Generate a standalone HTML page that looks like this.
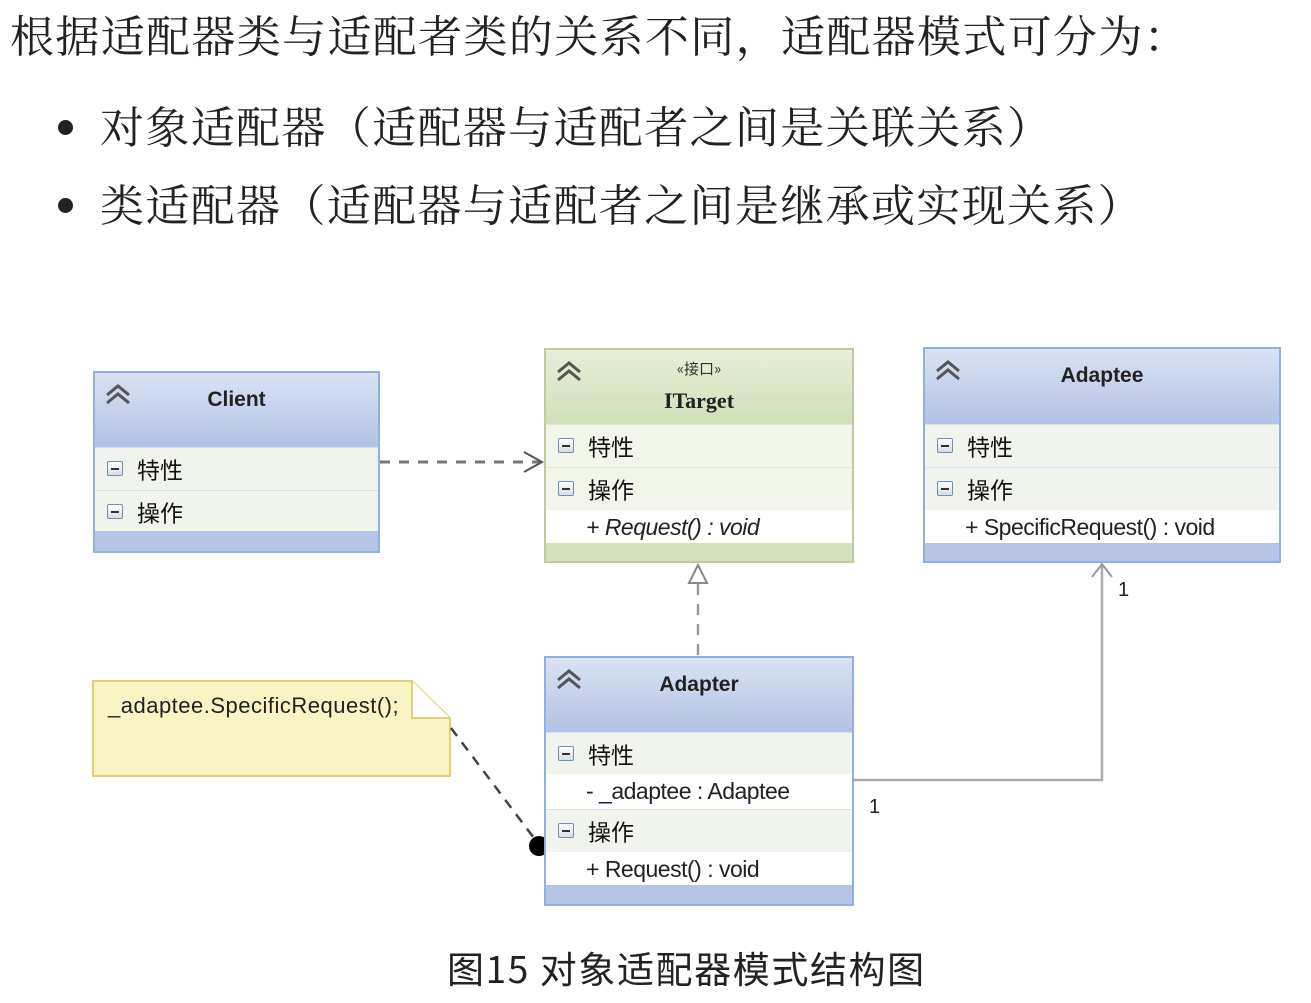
<!DOCTYPE html>
<html><head><meta charset="utf-8"><style>
*{margin:0;padding:0;box-sizing:border-box}
body{width:1311px;height:1003px;background:#fff;position:relative;overflow:hidden;font-family:"Liberation Sans","Noto Sans CJK SC",sans-serif;color:#222}
.t{position:absolute;white-space:nowrap;font-family:"Noto Serif CJK SC",serif;font-size:44px;color:#222;line-height:1;letter-spacing:1.35px}
.dot{position:absolute;width:15px;height:15px;border-radius:50%;background:#222}
.box{position:absolute;border:2px solid #8fb0e0;background:#fff}
.box.g{border-color:#c2c99f}
.hd{position:absolute;left:0;right:0;top:0;background:linear-gradient(#dae2f3,#b3c2e4)}
.g .hd{background:linear-gradient(#e8efd9,#cfdfb7)}
.row{position:absolute;left:0;right:0;background:#f1f4ec;border-top:1px solid #d5def0}
.g .row{background:#f1f5ea;border-top-color:#dfe8cf}
.row .lbl{position:absolute;left:42px;top:50%;transform:translateY(-52%);font-size:23px;font-family:"Noto Sans CJK SC",sans-serif;color:#111}
.mi{position:absolute;left:12px;top:50%;margin-top:-8px;width:16px;height:15px;border:1px solid #6d8fb8;border-radius:2px;background:linear-gradient(#fff,#d8dde5)}
.mi:after{content:"";position:absolute;left:3px;right:3px;top:6px;height:2px;background:#333}
.m{position:absolute;left:0;right:0;background:#fff}
.m span{position:absolute;left:40px;top:50%;transform:translateY(-52%);font-size:23px;color:#222;letter-spacing:-0.5px}
.ft{position:absolute;left:0;right:0;bottom:0;background:#b6c4e6}
.g .ft{background:#d2e0bb}
.nm{position:absolute;left:0;right:0;text-align:center;font-weight:bold;font-size:21px;color:#222}
.chev{position:absolute;left:8px;top:8px}
</style></head><body>
<div class="t" style="left:10px;top:11px">根据适配器类与适配者类的关系不同，适配器模式可分为：</div>
<div class="dot" style="left:58px;top:120px"></div>
<div class="t" style="left:100px;top:102px">对象适配器（适配器与适配者之间是关联关系）</div>
<div class="dot" style="left:58px;top:198px"></div>
<div class="t" style="left:100px;top:180px">类适配器（适配器与适配者之间是继承或实现关系）</div>

<svg width="1311" height="1003" style="position:absolute;left:0;top:0">
<line x1="380" y1="462" x2="541" y2="462" stroke="#777" stroke-width="3" stroke-dasharray="10,9"/>
<polyline points="524,452 542,462 524,472" fill="none" stroke="#555" stroke-width="2"/>
<line x1="698" y1="584" x2="698" y2="656" stroke="#999" stroke-width="2.5" stroke-dasharray="11,9"/>
<polygon points="698,565 689,583 707,583" fill="#fff" stroke="#888" stroke-width="2"/>
<polyline points="853,780 1102,780 1102,564" fill="none" stroke="#aaa" stroke-width="2.5"/>
<polyline points="1092,577 1102,564 1112,577" fill="none" stroke="#999" stroke-width="2"/>
<text x="1118" y="596" font-size="20" font-family="Liberation Sans" fill="#222">1</text>
<text x="869" y="813" font-size="20" font-family="Liberation Sans" fill="#222">1</text>
<polygon points="93,681 412,681 450,718 450,776 93,776" fill="#f9f4c4" stroke="#e2cf6f" stroke-width="2"/>
<polyline points="412,681 412,718 450,718" fill="#fff" stroke="#e2cf6f" stroke-width="2"/>
<text x="108" y="713" font-size="22" font-family="Liberation Sans" fill="#222" letter-spacing="-0.6" textLength="290">_adaptee.SpecificRequest();</text>
<line x1="451" y1="728" x2="534" y2="838" stroke="#444" stroke-width="2.5" stroke-dasharray="10,8"/>
<circle cx="539" cy="846" r="10" fill="#000"/>
</svg>

<!-- Client -->
<div class="box" style="left:93px;top:371px;width:287px;height:182px">
 <div class="hd" style="height:74px"></div>
 <svg class="chev" width="30" height="26"><path d="M4 14 L15 5 L26 14 M4 22 L15 13 L26 22" fill="none" stroke="#555" stroke-width="3"/></svg>
 <div class="nm" style="top:15px">Client</div>
 <div class="row" style="top:74px;height:43px"><div class="mi"></div><div class="lbl">特性</div></div>
 <div class="row" style="top:117px;height:43px"><div class="mi"></div><div class="lbl">操作</div></div>
 <div class="ft" style="height:20px"></div>
</div>

<!-- ITarget -->
<div class="box g" style="left:544px;top:348px;width:310px;height:215px">
 <div class="hd" style="height:74px"></div>
 <svg class="chev" width="30" height="26"><path d="M4 14 L15 5 L26 14 M4 22 L15 13 L26 22" fill="none" stroke="#555" stroke-width="3"/></svg>
 <div style="position:absolute;left:0;right:0;top:8px;text-align:center;font-size:15px;font-family:'Noto Sans CJK SC',sans-serif;color:#333">«接口»</div>
 <div class="nm" style="top:38px;font-family:'Liberation Serif',serif;font-size:22px">ITarget</div>
 <div class="row" style="top:74px;height:43px"><div class="mi"></div><div class="lbl">特性</div></div>
 <div class="row" style="top:117px;height:43px"><div class="mi"></div><div class="lbl">操作</div></div>
 <div class="m" style="top:160px;height:35px"><span style="font-style:italic">+ Request() : void</span></div>
 <div class="ft" style="height:18px"></div>
</div>

<!-- Adaptee -->
<div class="box" style="left:923px;top:347px;width:358px;height:216px">
 <div class="hd" style="height:75px"></div>
 <svg class="chev" width="30" height="26"><path d="M4 14 L15 5 L26 14 M4 22 L15 13 L26 22" fill="none" stroke="#555" stroke-width="3"/></svg>
 <div class="nm" style="top:15px">Adaptee</div>
 <div class="row" style="top:75px;height:43px"><div class="mi"></div><div class="lbl">特性</div></div>
 <div class="row" style="top:118px;height:43px"><div class="mi"></div><div class="lbl">操作</div></div>
 <div class="m" style="top:161px;height:35px"><span>+ SpecificRequest() : void</span></div>
 <div class="ft" style="height:18px"></div>
</div>

<!-- Adapter -->
<div class="box" style="left:544px;top:656px;width:310px;height:250px">
 <div class="hd" style="height:74px"></div>
 <svg class="chev" width="30" height="26"><path d="M4 14 L15 5 L26 14 M4 22 L15 13 L26 22" fill="none" stroke="#555" stroke-width="3"/></svg>
 <div class="nm" style="top:15px">Adapter</div>
 <div class="row" style="top:74px;height:42px"><div class="mi"></div><div class="lbl">特性</div></div>
 <div class="m" style="top:116px;height:35px"><span>- _adaptee : Adaptee</span></div>
 <div class="row" style="top:151px;height:43px"><div class="mi"></div><div class="lbl">操作</div></div>
 <div class="m" style="top:194px;height:35px"><span>+ Request() : void</span></div>
 <div class="ft" style="height:19px"></div>
</div>

<div style="position:absolute;left:447px;top:944px;font-size:37px;line-height:46px;white-space:nowrap;color:#222;letter-spacing:1.6px;font-family:'Noto Sans CJK SC',sans-serif">图15 对象适配器模式结构图</div>
</body></html>
